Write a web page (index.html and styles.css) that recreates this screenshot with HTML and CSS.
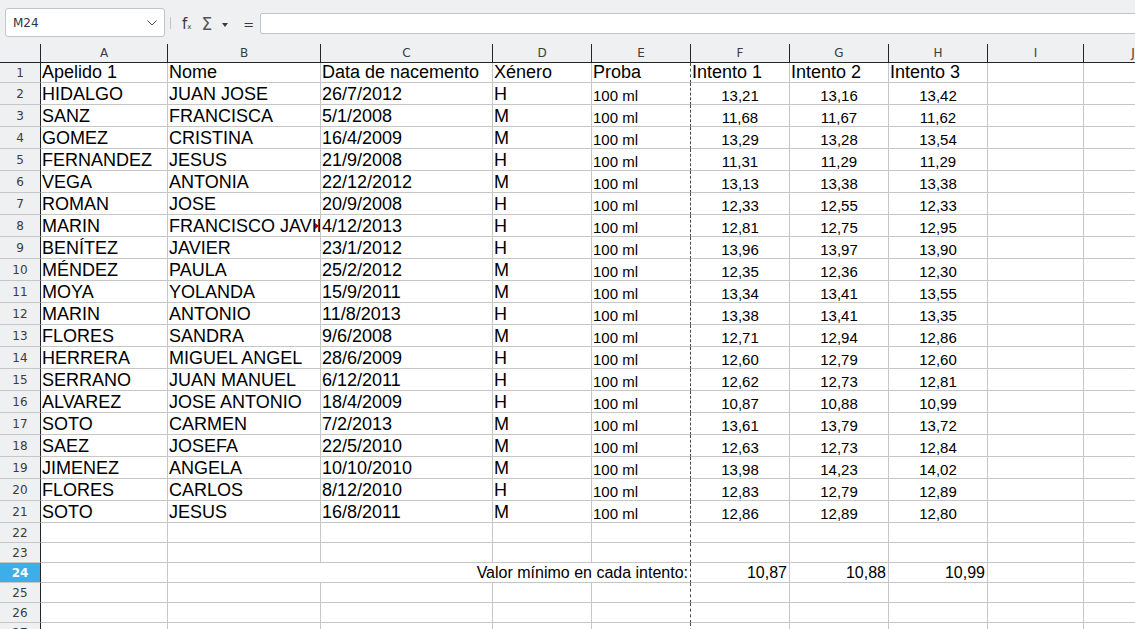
FILE: index.html
```html
<!DOCTYPE html>
<html lang="gl">
<head>
    <meta charset="UTF-8">
    <title>Probas 100 ml</title>
    <link rel="stylesheet" href="styles.css">
</head>
<body>
    <!-- Formula bar -->
    <div class="toolbar">
        <div class="namebox">
            <span>M24</span>
            <svg class="chevron" width="10" height="6" viewBox="0 0 10 6"><polyline points="0.5,0.5 5,5 9.5,0.5" fill="none" stroke="#4d4d4d" stroke-width="1"/></svg>
        </div>
        <div class="tb-sep"></div>
        <span class="tb-icon fx">f<sub>x</sub></span>
        <span class="tb-icon sigma">&Sigma;</span>
        <span class="drop"></span>
        <span class="tb-icon equal">=</span>
        <div class="formula"></div>
    </div>

    <div class="sheet">
        <div class="row colhead">
            <div class="hd"></div>
            <div class="hd">A</div><div class="hd">B</div><div class="hd">C</div><div class="hd">D</div><div class="hd">E</div>
            <div class="hd">F</div><div class="hd">G</div><div class="hd">H</div><div class="hd">I</div><div class="hd">J</div>
        </div>

        <div class="row r20">
            <div class="rh">1</div>
            <div class="c">Apelido 1</div><div class="c">Nome</div><div class="c">Data de nacemento</div><div class="c">Xénero</div><div class="c brk">Proba</div>
            <div class="c">Intento 1</div><div class="c">Intento 2</div><div class="c">Intento 3</div><div class="c"></div><div class="c"></div>
        </div>
        <div class="row r22">
            <div class="rh">2</div>
            <div class="c">HIDALGO</div><div class="c">JUAN JOSE</div><div class="c">26/7/2012</div><div class="c">H</div><div class="c sm brk">100 ml</div>
            <div class="c num">13,21</div><div class="c num">13,16</div><div class="c num">13,42</div><div class="c"></div><div class="c"></div>
        </div>
        <div class="row r22">
            <div class="rh">3</div>
            <div class="c">SANZ</div><div class="c">FRANCISCA</div><div class="c">5/1/2008</div><div class="c">M</div><div class="c sm brk">100 ml</div>
            <div class="c num">11,68</div><div class="c num">11,67</div><div class="c num">11,62</div><div class="c"></div><div class="c"></div>
        </div>
        <div class="row r22">
            <div class="rh">4</div>
            <div class="c">GOMEZ</div><div class="c">CRISTINA</div><div class="c">16/4/2009</div><div class="c">M</div><div class="c sm brk">100 ml</div>
            <div class="c num">13,29</div><div class="c num">13,28</div><div class="c num">13,54</div><div class="c"></div><div class="c"></div>
        </div>
        <div class="row r22">
            <div class="rh">5</div>
            <div class="c">FERNANDEZ</div><div class="c">JESUS</div><div class="c">21/9/2008</div><div class="c">H</div><div class="c sm brk">100 ml</div>
            <div class="c num">11,31</div><div class="c num">11,29</div><div class="c num">11,29</div><div class="c"></div><div class="c"></div>
        </div>
        <div class="row r22">
            <div class="rh">6</div>
            <div class="c">VEGA</div><div class="c">ANTONIA</div><div class="c">22/12/2012</div><div class="c">M</div><div class="c sm brk">100 ml</div>
            <div class="c num">13,13</div><div class="c num">13,38</div><div class="c num">13,38</div><div class="c"></div><div class="c"></div>
        </div>
        <div class="row r22">
            <div class="rh">7</div>
            <div class="c">ROMAN</div><div class="c">JOSE</div><div class="c">20/9/2008</div><div class="c">H</div><div class="c sm brk">100 ml</div>
            <div class="c num">12,33</div><div class="c num">12,55</div><div class="c num">12,33</div><div class="c"></div><div class="c"></div>
        </div>
        <div class="row r22">
            <div class="rh">8</div>
            <div class="c">MARIN</div><div class="c clipped">FRANCISCO JAVIER</div><div class="c">4/12/2013</div><div class="c">H</div><div class="c sm brk">100 ml</div>
            <div class="c num">12,81</div><div class="c num">12,75</div><div class="c num">12,95</div><div class="c"></div><div class="c"></div>
        </div>
        <div class="row r22">
            <div class="rh">9</div>
            <div class="c">BENÍTEZ</div><div class="c">JAVIER</div><div class="c">23/1/2012</div><div class="c">H</div><div class="c sm brk">100 ml</div>
            <div class="c num">13,96</div><div class="c num">13,97</div><div class="c num">13,90</div><div class="c"></div><div class="c"></div>
        </div>
        <div class="row r22">
            <div class="rh">10</div>
            <div class="c">MÉNDEZ</div><div class="c">PAULA</div><div class="c">25/2/2012</div><div class="c">M</div><div class="c sm brk">100 ml</div>
            <div class="c num">12,35</div><div class="c num">12,36</div><div class="c num">12,30</div><div class="c"></div><div class="c"></div>
        </div>
        <div class="row r22">
            <div class="rh">11</div>
            <div class="c">MOYA</div><div class="c">YOLANDA</div><div class="c">15/9/2011</div><div class="c">M</div><div class="c sm brk">100 ml</div>
            <div class="c num">13,34</div><div class="c num">13,41</div><div class="c num">13,55</div><div class="c"></div><div class="c"></div>
        </div>
        <div class="row r22">
            <div class="rh">12</div>
            <div class="c">MARIN</div><div class="c">ANTONIO</div><div class="c">11/8/2013</div><div class="c">H</div><div class="c sm brk">100 ml</div>
            <div class="c num">13,38</div><div class="c num">13,41</div><div class="c num">13,35</div><div class="c"></div><div class="c"></div>
        </div>
        <div class="row r22">
            <div class="rh">13</div>
            <div class="c">FLORES</div><div class="c">SANDRA</div><div class="c">9/6/2008</div><div class="c">M</div><div class="c sm brk">100 ml</div>
            <div class="c num">12,71</div><div class="c num">12,94</div><div class="c num">12,86</div><div class="c"></div><div class="c"></div>
        </div>
        <div class="row r22">
            <div class="rh">14</div>
            <div class="c">HERRERA</div><div class="c">MIGUEL ANGEL</div><div class="c">28/6/2009</div><div class="c">H</div><div class="c sm brk">100 ml</div>
            <div class="c num">12,60</div><div class="c num">12,79</div><div class="c num">12,60</div><div class="c"></div><div class="c"></div>
        </div>
        <div class="row r22">
            <div class="rh">15</div>
            <div class="c">SERRANO</div><div class="c">JUAN MANUEL</div><div class="c">6/12/2011</div><div class="c">H</div><div class="c sm brk">100 ml</div>
            <div class="c num">12,62</div><div class="c num">12,73</div><div class="c num">12,81</div><div class="c"></div><div class="c"></div>
        </div>
        <div class="row r22">
            <div class="rh">16</div>
            <div class="c">ALVAREZ</div><div class="c">JOSE ANTONIO</div><div class="c">18/4/2009</div><div class="c">H</div><div class="c sm brk">100 ml</div>
            <div class="c num">10,87</div><div class="c num">10,88</div><div class="c num">10,99</div><div class="c"></div><div class="c"></div>
        </div>
        <div class="row r22">
            <div class="rh">17</div>
            <div class="c">SOTO</div><div class="c">CARMEN</div><div class="c">7/2/2013</div><div class="c">M</div><div class="c sm brk">100 ml</div>
            <div class="c num">13,61</div><div class="c num">13,79</div><div class="c num">13,72</div><div class="c"></div><div class="c"></div>
        </div>
        <div class="row r22">
            <div class="rh">18</div>
            <div class="c">SAEZ</div><div class="c">JOSEFA</div><div class="c">22/5/2010</div><div class="c">M</div><div class="c sm brk">100 ml</div>
            <div class="c num">12,63</div><div class="c num">12,73</div><div class="c num">12,84</div><div class="c"></div><div class="c"></div>
        </div>
        <div class="row r22">
            <div class="rh">19</div>
            <div class="c">JIMENEZ</div><div class="c">ANGELA</div><div class="c">10/10/2010</div><div class="c">M</div><div class="c sm brk">100 ml</div>
            <div class="c num">13,98</div><div class="c num">14,23</div><div class="c num">14,02</div><div class="c"></div><div class="c"></div>
        </div>
        <div class="row r22">
            <div class="rh">20</div>
            <div class="c">FLORES</div><div class="c">CARLOS</div><div class="c">8/12/2010</div><div class="c">H</div><div class="c sm brk">100 ml</div>
            <div class="c num">12,83</div><div class="c num">12,79</div><div class="c num">12,89</div><div class="c"></div><div class="c"></div>
        </div>
        <div class="row r22">
            <div class="rh">21</div>
            <div class="c">SOTO</div><div class="c">JESUS</div><div class="c">16/8/2011</div><div class="c">M</div><div class="c sm brk">100 ml</div>
            <div class="c num">12,86</div><div class="c num">12,89</div><div class="c num">12,80</div><div class="c"></div><div class="c"></div>
        </div>

        <div class="row r20">
            <div class="rh">22</div>
            <div class="c"></div><div class="c"></div><div class="c"></div><div class="c"></div><div class="c brk"></div>
            <div class="c"></div><div class="c"></div><div class="c"></div><div class="c"></div><div class="c"></div>
        </div>
        <div class="row r20">
            <div class="rh">23</div>
            <div class="c"></div><div class="c"></div><div class="c"></div><div class="c"></div><div class="c brk"></div>
            <div class="c"></div><div class="c"></div><div class="c"></div><div class="c"></div><div class="c"></div>
        </div>
        <!-- Summary row: label spans B:E -->
        <div class="row r20">
            <div class="rh current">24</div>
            <div class="c"></div>
            <div class="c md right span4 brk">Valor mínimo en cada intento:</div>
            <div class="c md right">10,87</div><div class="c md right">10,88</div><div class="c md right">10,99</div><div class="c"></div><div class="c"></div>
        </div>
        <div class="row r20">
            <div class="rh">25</div>
            <div class="c"></div><div class="c"></div><div class="c"></div><div class="c"></div><div class="c brk"></div>
            <div class="c"></div><div class="c"></div><div class="c"></div><div class="c"></div><div class="c"></div>
        </div>
        <div class="row r20">
            <div class="rh">26</div>
            <div class="c"></div><div class="c"></div><div class="c"></div><div class="c"></div><div class="c brk"></div>
            <div class="c"></div><div class="c"></div><div class="c"></div><div class="c"></div><div class="c"></div>
        </div>
        <div class="row r20">
            <div class="rh">27</div>
            <div class="c"></div><div class="c"></div><div class="c"></div><div class="c"></div><div class="c brk"></div>
            <div class="c"></div><div class="c"></div><div class="c"></div><div class="c"></div><div class="c"></div>
        </div>
    </div>
</body>
</html>
```

FILE: styles.css
```css
* {
    margin: 0;
    padding: 0;
    box-sizing: border-box;
}

body {
    font-family: 'Liberation Sans', Arial, sans-serif;
    background: #eff0f1;
    color: #000;
    height: 629px;
    overflow: hidden;
}

/* Formula bar */
.toolbar {
    height: 44px;
    display: flex;
    align-items: flex-start;
    padding: 8px 0 0 5px;
    font-family: 'DejaVu Sans', sans-serif;
    color: #31363b;
}

.namebox {
    width: 160px;
    height: 29px;
    background: #fff;
    border: 1px solid #c3c4c5;
    border-radius: 3px;
    display: flex;
    align-items: center;
    justify-content: space-between;
    padding: 0 7px 0 7px;
    font-size: 12px;
}

.chevron {
    margin-top: 1px;
}

.tb-sep {
    width: 1px;
    height: 12px;
    margin: 9px 0 0 5px;
    background: #c3c4c5;
}

.tb-icon {
    line-height: 1;
    color: #3a3a3a;
}

.fx {
    margin: 9px 0 0 11px;
    font-size: 15px;
}

.fx sub {
    font-size: 7px;
    vertical-align: baseline;
}

.sigma {
    margin: 8px 0 0 10px;
    font-size: 17px;
    color: #555;
}

.drop {
    width: 0;
    height: 0;
    margin: 15px 0 0 10px;
    border-top: 4px solid #3a3a3a;
    border-left: 3px solid transparent;
    border-right: 3px solid transparent;
}

.equal {
    margin: 10px 0 0 15px;
    font-size: 13px;
}

.formula {
    flex: 1;
    height: 21px;
    margin: 5px -2px 0 6px;
    background: #fff;
    border: 1px solid #c3c4c5;
    border-radius: 2px;
}

/* Grid */
.sheet {
    background: #fff;
    width: 1140px;
}

.row {
    display: grid;
    grid-template-columns: 41px 127px 153px 172px 99px 99px 99px 99px 99px 96px 99px;
}

.r20 {
    height: 20px;
}

.r22 {
    height: 22px;
}

.colhead {
    height: 19px;
    background: #eff0f1;
    border-bottom: 1px solid #232629;
}

.hd {
    border-right: 1px solid #232629;
    font-family: 'DejaVu Sans', sans-serif;
    font-size: 12px;
    color: #3c3c3c;
    text-align: center;
    line-height: 18px;
}

.rh {
    background: #eff0f1;
    border-right: 1px solid #232629;
    border-bottom: 1px solid #c6c6c6;
    font-family: 'DejaVu Sans', sans-serif;
    font-size: 12px;
    color: #3c3c3c;
    display: flex;
    align-items: center;
    justify-content: center;
}

.rh.current {
    background: #3daee9;
    color: #fff;
    font-weight: bold;
}

.c {
    border-right: 1px solid #c6c6c6;
    border-bottom: 1px solid #c6c6c6;
    display: flex;
    align-items: flex-end;
    padding: 0 1px 1px;
    font-size: 18px;
    line-height: 1;
    white-space: nowrap;
    overflow: hidden;
    position: relative;
}

/* page break line between E and F */
.brk {
    border-right: 1px dashed #4a4a4a;
}

.sm {
    font-size: 15px;
}

.num {
    font-size: 15px;
    justify-content: center;
}

.md {
    font-size: 16px;
}

.right {
    justify-content: flex-end;
    padding-right: 2px;
}

.span4 {
    grid-column: span 4;
}

/* text cut off at cell edge */
.clipped::after {
    content: "";
    position: absolute;
    right: 1px;
    top: 8px;
    border-left: 4px solid #b00000;
    border-top: 3px solid transparent;
    border-bottom: 3px solid transparent;
}
```
